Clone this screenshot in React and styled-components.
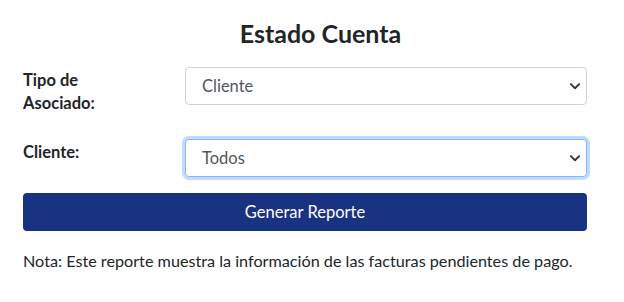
import React from 'react'
import styled, { createGlobalStyle } from 'styled-components'

const GlobalStyle = createGlobalStyle`
  html, body {
    margin: 0;
    background: #fff;
  }
  body {
    font-family: Lato, "Noto Sans", sans-serif;
    color: #212529;
    font-size: 16px;
  }
`

const Page = styled.div`
  padding: 17px 37px 0 23px;
`

const Title = styled.h2`
  margin: 0 0 18px;
  padding-left: 31px;
  text-align: center;
  font-size: 25px;
  font-weight: 700;
  line-height: 32px;
  color: #212529;
`

const FormRow = styled.div`
  display: grid;
  grid-template-columns: 162px 1fr;
  align-items: start;
  margin-bottom: ${p => p.$gap ?? 24}px;
`

const Label = styled.label`
  font-weight: 700;
  font-size: 16.5px;
  line-height: 23px;
  padding-top: 2px;
  padding-right: 40px;
`

const SelectWrap = styled.div`
  position: relative;
`

const Select = styled.select`
  appearance: none;
  width: 100%;
  height: 38px;
  box-sizing: border-box;
  padding: 0 36px 0 16px;
  font-family: inherit;
  font-size: 16.5px;
  color: #50575e;
  background: #fff;
  border: 1px solid ${p => (p.$focused ? '#86b7fe' : '#ced4da')};
  border-radius: 4px;
  box-shadow: ${p => (p.$focused ? '0 0 0 3px rgba(13, 110, 253, 0.25)' : 'none')};
  outline: none;
`

const Chevron = styled.svg`
  position: absolute;
  right: 6px;
  top: 14px;
  width: 12px;
  height: 10px;
  pointer-events: none;
`

const Button = styled.button`
  display: block;
  width: 100%;
  height: 38px;
  margin-top: 16px;
  border: 0;
  border-radius: 4px;
  background: #1a3282;
  color: #fff;
  font-family: inherit;
  font-size: 16.5px;
`

const Note = styled.p`
  margin: 18px 0 0;
  font-size: 16.2px;
  line-height: 24px;
`

function ArrowDown() {
  return (
    <Chevron viewBox="0 0 16 12">
      <path
        d="M2.5 3.5l5.5 5.5 5.5-5.5"
        fill="none"
        stroke="#343a40"
        strokeWidth="2.6"
        strokeLinecap="round"
        strokeLinejoin="round"
      />
    </Chevron>
  )
}

function Field({ label, value, focused, gap }) {
  return (
    <FormRow $gap={gap}>
      <Label>{label}</Label>
      <SelectWrap>
        <Select $focused={focused} defaultValue={value}>
          <option>{value}</option>
        </Select>
        <ArrowDown />
      </SelectWrap>
    </FormRow>
  )
}

export default function App() {
  return (
    <>
      <GlobalStyle />
      <Page>
        <Title>Estado Cuenta</Title>
        <Field label="Tipo de Asociado:" value="Cliente" />
        <Field label="Cliente:" value="Todos" focused gap={0} />
        <Button>Generar Reporte</Button>
        <Note>Nota: Este reporte muestra la información de las facturas pendientes de pago.</Note>
      </Page>
    </>
  )
}
